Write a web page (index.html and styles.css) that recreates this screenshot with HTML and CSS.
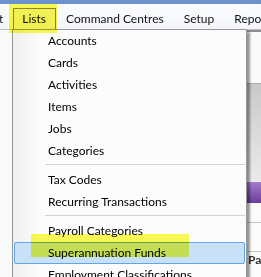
FILE: index.html
```html
<!DOCTYPE html>
<html lang="en">
<head>
  <meta charset="UTF-8">
  <title>Lists menu</title>
  <link rel="stylesheet" href="styles.css">
</head>
<body>

  <div class="titlebar"></div>

  <div class="menubar">
    <span class="bar-item bar-cut">t</span>
    <span class="bar-item bar-open">Lists</span>
    <span class="bar-item">Command Centres</span>
    <span class="bar-item">Setup</span>
    <span class="bar-item">Reports</span>
  </div>

  <div class="desk">
    <div class="desk-left"></div>
    <div class="panel">
      <div class="panel-top"></div>
      <div class="panel-grey"></div>
      <div class="panel-purple"></div>
      <div class="panel-row"></div>
      <div class="panel-row panel-row-tall"></div>
      <div class="panel-label">Pay</div>
    </div>
  </div>

  <!-- dropdown of the Lists menu -->
  <div class="dropdown">
    <div class="menu-item">Accounts</div>
    <div class="menu-item">Cards</div>
    <div class="menu-item">Activities</div>
    <div class="menu-item">Items</div>
    <div class="menu-item">Jobs</div>
    <div class="menu-item">Categories</div>
    <div class="menu-sep"></div>
    <div class="menu-item">Tax Codes</div>
    <div class="menu-item">Recurring Transactions</div>
    <div class="menu-sep"></div>
    <div class="menu-item">Payroll Categories</div>
    <div class="menu-item menu-item-hover">Superannuation Funds</div>
    <div class="menu-item">Employment Classifications</div>
  </div>

  <!-- highlighter marks -->
  <div class="marker marker-lists"></div>
  <div class="marker marker-super"></div>

</body>
</html>
```

FILE: styles.css
```css
html, body {
  margin: 0;
  height: 100%;
  overflow: hidden;
}
body {
  font-family: Lato, "Noto Sans", sans-serif;
  font-size: 12px;
  color: #000;
  background-color: #f6f6f6;
  position: relative;
}
.titlebar {
  height: 4px;
  background-color: #6b92cc;
}
.menubar {
  display: flex;
  align-items: flex-end;
  height: 25px;
  background: linear-gradient(#fbfcfd, #f3f5f8);
  white-space: nowrap;
  overflow: hidden;
}
.bar-item {
  height: 20px;
  line-height: 20px;
  padding: 0 10px;
  color: #101020;
}
.bar-cut {
  padding-left: 0;
  margin-left: -1px;
}
.bar-open {
  padding: 0 9px 0 8px;
  border: 1px solid #8a8a8a;
  border-bottom: none;
  background-color: #f4f4f4;
}
.desk {
  display: flex;
  height: 248px;
  border-top: 1px solid #bdbdbd;
}
.desk-left {
  flex: 1;
  background: linear-gradient(90deg, #f9f9f9, #f1f1f1);
}
.panel {
  width: 14px;
  display: flex;
  flex-direction: column;
  background-color: #fbfbfb;
  border-top: 2px solid #8e8e8e;
  overflow: hidden;
}
.panel-top {
  height: 51px;
  border-bottom: 1px solid #a9a9a9;
  background-color: #fafafa;
}
.panel-grey {
  height: 98px;
  background: linear-gradient(#c9c9c9, #ebebeb);
}
.panel-purple {
  height: 21px;
  background: linear-gradient(#a47dca, #6c3d9c);
}
.panel-row {
  height: 19px;
  border-bottom: 1px solid #c4c4c4;
}
.panel-row-tall {
  height: 28px;
}
.panel-label {
  padding-left: 1px;
  font-weight: bold;
  line-height: 16px;
  color: #333;
  white-space: nowrap;
}
.dropdown {
  position: absolute;
  left: 12px;
  top: 29px;
  width: 233px;
  height: 260px;
  border: 1px solid #979797;
  background: linear-gradient(90deg, #efefef 0, #fcfcfc 30px, #fcfcfc);
  box-shadow: 3px 3px 2px rgba(0, 0, 0, 0.4);
}
.menu-item {
  height: 22px;
  line-height: 22px;
  padding-left: 35px;
  white-space: nowrap;
}
.menu-item-hover {
  height: 20px;
  line-height: 20px;
  margin: 0 1px;
  padding-left: 33px;
  border: 1px solid #62a6ea;
  border-radius: 2px;
  background-color: #c8e1f8;
}
.menu-sep {
  height: 1px;
  margin: 2px 1px 3px 32px;
  background-color: #d4d4d4;
  border-bottom: 1px solid #ffffff;
}
.marker {
  position: absolute;
  background-color: #fbfb55;
  mix-blend-mode: multiply;
}
.marker-lists {
  left: 9px;
  top: 4px;
  width: 48px;
  height: 29px;
}
.marker-super {
  left: 31px;
  top: 234px;
  width: 158px;
  height: 23px;
}
```
